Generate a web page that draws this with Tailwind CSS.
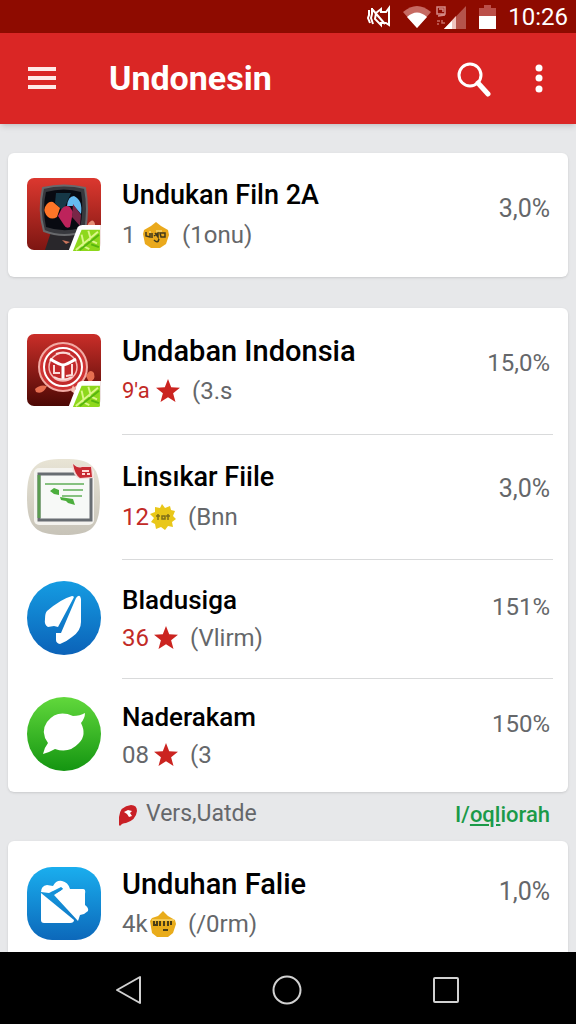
<!DOCTYPE html>
<html lang="id">
<head>
    <meta charset="UTF-8">
    <meta name="viewport" content="width=device-width, initial-scale=1.0">
    <title>Undonesin</title>
    <script src="https://cdn.jsdelivr.net/npm/@tailwindcss/browser@4"></script>
</head>
<body class="flex h-screen flex-col overflow-hidden bg-[#e7e8ea] font-['Roboto',sans-serif] text-black">
    <!-- Shared symbols -->
    <svg class="hidden">
        <symbol id="star" viewBox="0 0 24 24">
            <path d="M12 0l3.200 8.200 8.800.5-6.900 5.500L19.500 23 12 18.200 4.500 23l2.400-8.800L0 8.700l8.800-.5z" fill="#cb2420"/>
        </symbol>
        <symbol id="leaf" viewBox="0 0 34 28">
            <path d="M10 2Q12 0 15 0H34V28H0z" fill="#fff"/>
            <path d="M14 5H33V26Q33 27 31 27H5z" fill="#8ed81c"/>
            <path d="M8 26L31 7M16 19l-2-9M23 13l-2-7M14 21l8 4M21 15l9 4" stroke="#dcf78a" stroke-width="2" fill="none"/>
            <path d="M12 26l20-16M24 20l8 3" stroke="#55b50f" stroke-width="2" fill="none"/>
        </symbol>
    </svg>

    <!-- Status bar -->
    <div class="flex h-[33px] shrink-0 items-center justify-end bg-[#8e0b00] pr-2 text-white">
        <svg class="mr-3 h-6 w-6" viewBox="0 0 24 24" fill="none" stroke="#fff" stroke-width="2">
            <path d="M2 5v5l-1 3 2 5M5 3v6l-1 4 2 6M5 4l13 15M9 8l5-4v3h5l3-4v17l-3-2h-5v2l-6-6z"/>
        </svg>
        <svg class="mr-1 h-6 w-7" viewBox="0 0 28 24">
            <path d="M0 7Q14-5 28 7L14 23z" fill="#c66a62"/>
            <path d="M4 12Q14 3 24 12L14 23z" fill="#fff"/>
        </svg>
        <svg class="mr-3 h-6 w-8" viewBox="0 0 32 24">
            <path d="M2 2h8v7H2zM4 4h4v3M3 11l7-1" fill="none" stroke="#d58b86" stroke-width="1.500"/>
            <path d="M2 16h3M2 19h2M7 15v3h3" fill="none" stroke="#c66a62" stroke-width="1.500"/>
            <path d="M31 1V24H9z" fill="#b5544c"/>
            <path d="M21 11V24H9z" fill="#efc4c0"/>
            <path d="M17 16V24H9z" fill="#fff"/>
        </svg>
        <svg class="mr-3 h-6 w-[17px]" viewBox="0 0 17 24">
            <path d="M5 0h7v3h5v9H0V3h5z" fill="#bb4f49"/>
            <path d="M0 11h17v13H0z" fill="#fff"/>
        </svg>
        <span class="text-2xl">10:26</span>
    </div>

    <!-- App bar -->
    <header class="z-10 flex h-[91px] shrink-0 items-center bg-[#da2625] pr-6 pl-7 text-white shadow-md">
        <button class="h-7 w-7" aria-label="Menu">
            <svg class="h-7 w-7" viewBox="0 0 28 28"><path d="M0 4h28M0 13h28M0 22h28" stroke="#ffe9e7" stroke-width="4"/></svg>
        </button>
        <h1 class="ml-[53px] flex-1 text-[34px] font-bold">Undonesin</h1>
        <button class="mr-9 h-9 w-9" aria-label="Cari">
            <svg class="h-9 w-9" viewBox="0 0 36 36" fill="none" stroke="#fff" stroke-linecap="round">
                <circle cx="14" cy="14" r="11" stroke-width="3"/>
                <path d="M22 22l10 11" stroke-width="5"/>
            </svg>
        </button>
        <button class="h-8 w-6" aria-label="Opsi lainnya">
            <svg class="h-8 w-6" viewBox="0 0 24 32" fill="#fff"><circle cx="11" cy="5" r="3.500"/><circle cx="11" cy="15" r="3.500"/><circle cx="11" cy="26" r="3.500"/></svg>
        </button>
    </header>

    <main class="min-h-0 flex-1 overflow-hidden px-2 pt-[29px]">
        <section class="rounded-md bg-white pr-[18px] pl-[19px] shadow">
            <div class="flex h-[124px] items-center gap-[21px]">
                <svg class="h-[74px] w-[74px] shrink-0" viewBox="0 0 74 74">
                    <defs>
                        <linearGradient id="tv" x2="0" y2="1"><stop stop-color="#dc382f"/><stop offset="1" stop-color="#7d1612"/></linearGradient>
                    </defs>
                    <rect width="74" height="72" rx="7" fill="url(#tv)"/>
                    <path d="M24 54L18 72H50L48 54z" fill="#29272b"/>
                    <path d="M35 62l4 4 4-2z" fill="#cc765d"/>
                    <path d="M16 10Q37 5 58 10Q62 31 58 53Q37 61 17 53Q11 32 16 10z" fill="#37383d" stroke="#68696c" stroke-width="2"/>
                    <path d="M19 14Q37 9 54 14Q57 31 53 50Q36 55 19 49Q15 31 19 14z" fill="#080a11"/>
                    <path d="M29 15h15l-8 18-8-8z" fill="#163847"/>
                    <path d="M18 29q3-6 8-5l7 6-3 9q-5 3-9 0-5-5-3-10z" fill="#ff7527"/>
                    <path d="M34 32q4-6 9-3l3 5-3 15q-4 2-6-2l-6-9z" fill="#bd235b"/>
                    <path d="M40 28q1-10 7-10 9 4 7 18l-7-8z" fill="#65baf0"/>
                    <path d="M46 26l8 11-1 11-8-9z" fill="#792647"/>
                    <path d="M61 46q5-7 7 0v5h-8z" fill="#e58d74"/>
                    <use href="#leaf" x="41" y="47" width="33" height="27"/>
                </svg>
                <div class="min-w-0 flex-1">
                    <h2 class="text-[27px] leading-10 font-medium">Undukan Filn 2A</h2>
                    <p class="flex items-center text-2xl leading-10 text-[#65676a]">
                        <span class="w-5">1</span>
                        <svg class="mr-3 h-7 w-7" viewBox="0 0 28 28">
                            <path d="M14 1l5 4 7 4 1 5-3 9-6 4h-9l-6-4L1 13l1-4 7-4z" fill="#eaa91c"/>
                            <path d="M4 11v4l4 1v-4M10 12v5M13 12l3 4v-4l-4 3M18 12h5v4h-4zM12 19q4 4 5-1" fill="none" stroke="#40391d" stroke-width="1.500"/>
                            <path d="M7 11h2M14 10h6" stroke="#ffec9a" stroke-width="1"/>
                        </svg>
                        <span>(1onu)</span>
                    </p>
                </div>
                <span class="pb-3 text-[25px] text-[#65676a]">3,0%</span>
            </div>
        </section>

        <section class="mt-[31px] rounded-md bg-white pl-[19px] shadow">
            <div class="flex items-center gap-[21px]">
                <svg class="h-[74px] w-[74px] shrink-0" viewBox="0 0 74 74">
                    <defs>
                        <linearGradient id="coin" x2="0" y2="1"><stop stop-color="#ca2e29"/><stop offset="1" stop-color="#4c0905"/></linearGradient>
                    </defs>
                    <rect width="74" height="72" rx="7" fill="url(#coin)"/>
                    <path d="M8 55q5-5 12-3-4 9-11 6zM59 42q4-8 8-3 2 8-5 9z" fill="#e66e50"/>
                    <circle cx="36" cy="33" r="24" fill="#cf3434" stroke="#f2aba4" stroke-width="2"/>
                    <circle cx="36" cy="33" r="19" fill="#c2292a" stroke="#fff" stroke-width="2"/>
                    <circle cx="36" cy="33" r="14" fill="none" stroke="#f6bbb8" stroke-width="1.500"/>
                    <path d="M23 25q10 6 13 6t13-6M36 31v14" fill="none" stroke="#fff" stroke-width="3"/>
                    <path d="M27 31v8h6M45 30v11l-6 1M27 43q9 5 18 0M29 20q7-3 14 0" fill="none" stroke="#fbdcd9" stroke-width="2"/>
                    <path d="M46 51l5 11-7-5z" fill="#f6c1b3"/>
                    <use href="#leaf" x="41" y="47" width="33" height="27"/>
                </svg>
                <div class="flex h-[126px] min-w-0 flex-1 items-center pr-[18px]">
                    <div class="flex-1">
                        <h2 class="text-[29px] leading-10 font-medium">Undaban Indonsia</h2>
                        <p class="flex items-center text-2xl leading-10 text-[#65676a]">
                            <span class="w-[34px] text-[22px] text-[#c22a26]">9'a</span>
                            <svg class="mr-3 h-6 w-6"><use href="#star"/></svg>
                            <span>(3.s</span>
                        </p>
                    </div>
                    <span class="pb-4 text-2xl text-[#65676a]">15,0%</span>
                </div>
            </div>

            <div class="flex items-center gap-[21px]">
                <svg class="h-[76px] w-[74px] shrink-0" viewBox="0 0 74 76">
                    <defs>
                        <linearGradient id="board" x2="0" y2="1"><stop stop-color="#e8e4d5"/><stop offset="1" stop-color="#c7c3b8"/></linearGradient>
                    </defs>
                    <path d="M37 0C65 0 73 7 73 38S65 76 37 76 0 69 0 38 9 0 37 0z" fill="url(#board)"/>
                    <rect x="7" y="9" width="60" height="57" rx="5" fill="#f4f3ef"/>
                    <path d="M12 15h52v46H12z" fill="#f7f9f7" stroke="#686d72" stroke-width="3"/>
                    <path d="M12 16v43" stroke="#5b9c50" stroke-width="3"/>
                    <path d="M18 25h39M36 31h20M35 37h20" stroke="#62ae5a" stroke-width="1.500"/>
                    <path d="M23 32l4-3 5 2v5l-5-1zM33 38l13 2 2 6-7-2-2-2-5-1z" fill="#4cae3d"/>
                    <path d="M45 4q5 5 10 3h10l2 12-14 1q-8-3-8-16z" fill="#f3d9d6"/>
                    <path d="M46 5q5 5 9 3h9l1 10-12 1q-5-3-7-14z" fill="#c72a32"/>
                    <path d="M55 12h7M55 15h3m2 0h3" stroke="#ffd9d7" stroke-width="2"/>
                </svg>
                <div class="mr-[15px] flex h-[125px] min-w-0 flex-1 items-center border-t border-[#d9dadb] pr-[3px]">
                    <div class="flex-1">
                        <h2 class="text-[27px] leading-10 font-medium">Linsıkar Fiile</h2>
                        <p class="flex items-center text-2xl leading-10 text-[#65676a]">
                            <span class="w-7 text-[#c22a26]">12</span>
                            <svg class="mr-3 h-[26px] w-[26px]" viewBox="0 0 26 26">
                                <path d="M12 0l3 4 5-2 1 4 4 1-2 5 3 3-4 3 1 5-5-1-3 4-4-3-5 2-1-5-4-2 3-4-4-4 5-2V3l5 1z" fill="#e9c719"/>
                                <path d="M8 10v6M6 12h4M12 12h3v3h-3zM18 10v6M16 12h4" fill="none" stroke="#807019" stroke-width="1.500"/>
                            </svg>
                            <span>(Bnn</span>
                        </p>
                    </div>
                    <span class="pb-4 text-[25px] text-[#65676a]">3,0%</span>
                </div>
            </div>

            <div class="flex items-center gap-[21px]">
                <svg class="h-[76px] w-[74px] shrink-0" viewBox="0 0 74 76">
                    <defs>
                        <linearGradient id="blue" x2="0" y2="1"><stop stop-color="#159ce2"/><stop offset="1" stop-color="#0b62b8"/></linearGradient>
                    </defs>
                    <ellipse cx="37" cy="37" rx="37" ry="37" fill="url(#blue)"/>
                    <path d="M20 30Q34 18 45 15q3 0 1 3L31 46l-4-1-6 1q-4-2-3-8 0-6 2-8z" fill="#fff"/>
                    <path d="M49 17q4-5 5 1v23q0 9-9 15-6 5-12 7-4-1-4-4v-7h5z" fill="#fff"/>
                </svg>
                <div class="mr-[15px] flex h-[119px] min-w-0 flex-1 items-center border-t border-[#d9dadb] pr-[3px]">
                    <div class="flex-1">
                        <h2 class="text-[26px] leading-[38px] font-medium">Bladusiga</h2>
                        <p class="flex items-center text-2xl leading-[38px] text-[#65676a]">
                            <span class="w-8 text-[#c22a26]">36</span>
                            <svg class="mr-3 h-6 w-6"><use href="#star"/></svg>
                            <span>(Vlirm)</span>
                        </p>
                    </div>
                    <span class="pb-6 text-2xl text-[#65676a]">151%</span>
                </div>
            </div>

            <div class="flex items-center gap-[21px]">
                <svg class="h-[76px] w-[74px] shrink-0" viewBox="0 0 74 76">
                    <defs>
                        <linearGradient id="green" x2="0" y2="1"><stop stop-color="#61d83c"/><stop offset="1" stop-color="#149511"/></linearGradient>
                    </defs>
                    <ellipse cx="37" cy="37" rx="37" ry="37" fill="url(#green)"/>
                    <path d="M58 16q0 5-4 10 6 12-2 20-10 11-24 6-5 3-12 5 1-6 5-11-8-11-1-21 10-13 26-6 7 0 12-3z" fill="#fff"/>
                </svg>
                <div class="mr-[15px] flex h-[114px] min-w-0 flex-1 items-center border-t border-[#d9dadb] pr-[3px]">
                    <div class="flex-1">
                        <h2 class="text-[26px] leading-[38px] font-medium">Naderakam</h2>
                        <p class="flex items-center text-2xl leading-[38px] text-[#65676a]">
                            <span class="w-8">08</span>
                            <svg class="mr-3 h-6 w-6"><use href="#star"/></svg>
                            <span>(3</span>
                        </p>
                    </div>
                    <span class="pb-6 text-2xl text-[#65676a]">150%</span>
                </div>
            </div>
        </section>

        <div class="flex h-[49px] items-center pr-[18px] pb-1 pl-[110px]">
            <svg class="mr-2 h-6 w-5" viewBox="0 0 20 24">
                <path d="M1 22V14Q2 3 13 2q6 0 6 6-1 9-11 12-4 0-6 3z" fill="#c92026"/>
                <path d="M6 9l4-2 4 1-2 2 2 3-3 1-2-3z" fill="#fff"/>
            </svg>
            <span class="flex-1 text-[23px] text-[#65676a]">Vers,Uatde</span>
            <a href="#" class="text-[22px] font-medium text-[#1b9a48]">I/<span class="underline">oql</span>iorah</a>
        </div>

        <section class="rounded-md bg-white pr-[18px] pl-[19px] shadow">
            <div class="flex h-[125px] items-center gap-[21px]">
                <svg class="h-[74px] w-[74px] shrink-0" viewBox="0 0 74 74">
                    <defs>
                        <linearGradient id="sky" x2="0" y2="1"><stop stop-color="#1aaeee"/><stop offset="1" stop-color="#0c68ba"/></linearGradient>
                    </defs>
                    <rect width="74" height="73" rx="25" fill="url(#sky)"/>
                    <path d="M14 26L47 53q0 3-4 3H17q-3 0-3-3z" fill="#fff"/>
                    <path d="M14 25q0-6 6-7l6 1q3-6 9-5 6 1 8 8h13q3 0 2 5v11q4 3 3 6l-4 3-4 1-2 6L27 28l9-6-2-2-12 6z" fill="#fff"/>
                    <path d="M24 26q8-1 11-5" stroke="#168fd7" stroke-width="2" fill="none"/>
                </svg>
                <div class="min-w-0 flex-1">
                    <h2 class="text-[29px] leading-10 font-medium">Unduhan Falie</h2>
                    <p class="flex items-center text-2xl leading-10 text-[#65676a]">
                        <span class="w-7">4k</span>
                        <svg class="mr-3 h-[26px] w-[26px]" viewBox="0 0 26 26">
                            <path d="M13 0l5 5 7 4 1 4-3 9-5 4H7l-5-4L0 10l2-3 6-2z" fill="#e9ac1b"/>
                            <path d="M4 10v4h3v-4M10 10v5M14 10v5M18 10v5M21 10v4M13 19h5" fill="none" stroke="#4b3e16" stroke-width="2"/>
                            <path d="M2 9h22" stroke="#ffe58b" stroke-width="1"/>
                        </svg>
                        <span>(/0rm)</span>
                    </p>
                </div>
                <span class="pb-6 text-[25px] text-[#65676a]">1,0%</span>
            </div>
        </section>
    </main>

    <!-- Navigation bar -->
    <nav class="flex h-[72px] shrink-0 items-center justify-between bg-black pt-1 pr-[114px] pl-[114px]">
        <button class="h-8 w-8" aria-label="Kembali">
            <svg class="h-8 w-8" viewBox="0 0 32 32"><path d="M26 3v26L3 16z" fill="none" stroke="#d1d1d1" stroke-width="2" stroke-linejoin="round"/></svg>
        </button>
        <button class="h-8 w-8" aria-label="Beranda">
            <svg class="h-8 w-8" viewBox="0 0 32 32"><circle cx="15" cy="16" r="13.500" fill="none" stroke="#d1d1d1" stroke-width="2"/></svg>
        </button>
        <button class="h-8 w-8" aria-label="Terbaru">
            <svg class="h-8 w-8" viewBox="0 0 32 32"><rect x="4" y="4" width="24" height="24" rx="1" fill="none" stroke="#d1d1d1" stroke-width="2"/></svg>
        </button>
    </nav>
</body>
</html>
